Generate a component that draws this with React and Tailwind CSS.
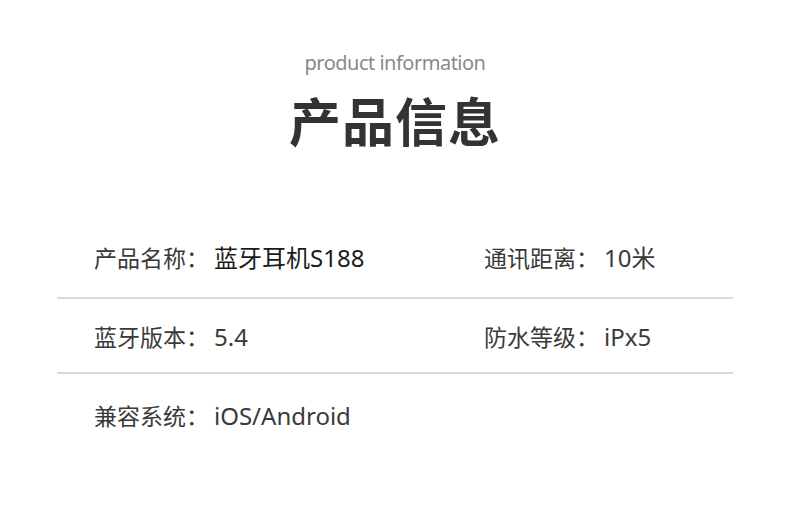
import React from 'react';

const rows = [
  [
    { label: '产品名称：', value: '蓝牙耳机S188', strong: true },
    { label: '通讯距离：', value: '10米' },
  ],
  [
    { label: '蓝牙版本：', value: '5.4' },
    { label: '防水等级：', value: 'iPx5' },
  ],
  [{ label: '兼容系统：', value: 'iOS/Android' }],
];

const Cell = ({ item }) =>
  item ? (
    <div className="leading-[24px] text-[#3a3a3a] whitespace-nowrap flex items-baseline">
      <span className="text-[23px]">{item.label}</span>
      <span className={`ml-[5px] text-[24px] ${item.strong ? 'text-[#1a1a1a]' : ''}`}>{item.value}</span>
    </div>
  ) : (
    <div />
  );

export default function App() {
  return (
    <div
      className="w-[790px] h-[528px] bg-white flex flex-col items-center"
      style={{ fontFamily: '"Noto Sans", "Noto Sans CJK SC", sans-serif' }}
    >
      <p className="mt-[50px] text-[20px] leading-[26px] tracking-[-0.5px] text-[#8a8a8a]">
        product information
      </p>
      <h1
        className="mt-[14px] text-[52px] leading-[60px] font-bold text-[#333] tracking-[1px]"
        style={{ fontFamily: '"Noto Sans CJK SC", sans-serif' }}
      >
        产品信息
      </h1>

      <div className="mt-[96px] w-[676px]">
        {rows.map((row, i) => (
          <div key={i}>
            <div
              className={`grid grid-cols-[390px_1fr] pl-[37px] ${
                i === 0 ? 'pb-[27px]' : i === 1 ? 'pt-[26px] pb-[23px]' : 'pt-[30px]'
              }`}
            >
              <Cell item={row[0]} />
              <Cell item={row[1]} />
            </div>
            {i < rows.length - 1 && <div className="h-[2px] bg-[#d9d9d9]" />}
          </div>
        ))}
      </div>
    </div>
  );
}
